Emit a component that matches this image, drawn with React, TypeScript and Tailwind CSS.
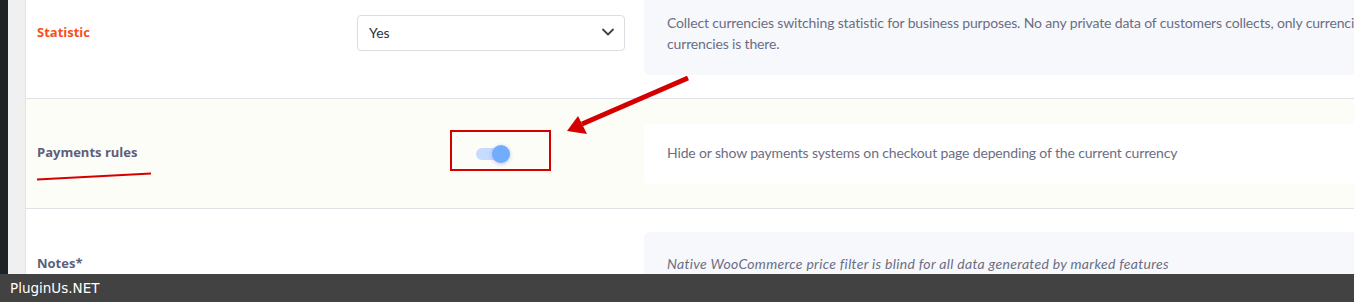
import React from "react";

export default function App() {
  return (
    <div className="relative flex h-[302px] w-[1354px] flex-col overflow-hidden bg-white font-['Lato',sans-serif]">
      <div className="flex min-h-0 flex-1">
        <div className="w-[8px] shrink-0 bg-[#1d2327]" />
        <div className="w-[18px] shrink-0 border-r border-[#e4e4e7] bg-[#f0f0f1]" />
        <div className="min-w-0 flex-1 overflow-hidden">
          {/* Row 1 */}
          <div className="flex h-[99px] items-start border-b border-[#e1e1e8] bg-white">
            <div className="w-[331px] shrink-0 pl-[11px] pt-[22px] font-['Open_Sans',sans-serif] text-[13px] font-bold leading-[20px] text-[#f4511e]">
              Statistic
            </div>
            <div className="mt-[15px] flex h-[36px] w-[268px] shrink-0 items-center justify-between rounded-[4px] border border-[#dcdce2] bg-white pb-[2px] pl-[11px] pr-[9px] text-[14px] text-[#2c3338]">
              <span>Yes</span>
              <svg width="14" height="14" viewBox="0 0 14 14" fill="none">
                <path d="M2 4.5 L7 9.5 L12 4.5" stroke="#3c434a" strokeWidth="1.8" strokeLinecap="round" strokeLinejoin="round" />
              </svg>
            </div>
            <div className="ml-[19px] mt-[-14px] h-[89px] w-[900px] shrink-0 whitespace-nowrap rounded-[6px] bg-[#f7f8fc] pl-[23px] pt-[26px] text-[14px] leading-[21px] tracking-[-0.15px] text-[#6b6e83]">
              Collect currencies switching statistic for business purposes. No any private data of customers collects, only currencies code, date and time. Also statistic for
              <br />
              currencies is there.
            </div>
          </div>
          {/* Row 2 */}
          <div className="flex h-[110px] items-center border-b border-[#e1e1e8] bg-[#fdfdf8]">
            <div className="w-[331px] shrink-0 pb-[3px] pl-[11px] font-['Open_Sans',sans-serif] text-[13px] font-bold leading-[20px] text-[#5b5f7d]">
              Payments rules
            </div>
            <div className="flex w-[268px] shrink-0 justify-center">
              <div className="relative h-[12px] w-[30px] rounded-full bg-[#c6dcfd]">
                <div className="absolute right-[-4px] top-[-3px] h-[18px] w-[18px] rounded-full bg-[#71adfc] shadow-[0_1px_4px_rgba(60,90,200,0.35)]" />
              </div>
            </div>
            <div className="ml-[19px] flex h-[60px] w-[900px] shrink-0 items-center whitespace-nowrap rounded-[6px] bg-white pb-[2px] pl-[23px] text-[14px] leading-[21px] tracking-[-0.15px] text-[#6b6e83]">
              Hide or show payments systems on checkout page depending of the current currency
            </div>
          </div>
          {/* Row 3 */}
          <div className="flex items-start bg-white">
            <div className="mt-[44px] w-[331px] shrink-0 pl-[11px] font-['Open_Sans',sans-serif] text-[13px] font-bold leading-[20px] text-[#5b5f7d]">
              Notes*
            </div>
            <div className="w-[268px] shrink-0" />
            <div className="ml-[19px] mt-[23px] h-[80px] w-[900px] shrink-0 whitespace-nowrap rounded-[6px] bg-[#f7f8fc] pl-[23px] pt-[21px] text-[14px] italic leading-[21px] tracking-[0.3px] text-[#6b6e83]">
              Native WooCommerce price filter is blind for all data generated by marked features
            </div>
          </div>
        </div>
      </div>
      <div className="flex h-[28px] shrink-0 items-center bg-[#424242] pl-[10px] font-['DejaVu_Sans',sans-serif] text-[13.5px] text-white">
        PluginUs.NET
      </div>

      {/* Annotations */}
      <svg className="pointer-events-none absolute left-0 top-0" width="1354" height="302" viewBox="0 0 1354 302">
        <line x1="37" y1="179.5" x2="151" y2="173.5" stroke="#d40000" strokeWidth="2" />
        <rect x="451" y="131" width="99" height="39" fill="none" stroke="#d40000" strokeWidth="2" />
        <line x1="688" y1="78" x2="582" y2="124" stroke="#d40000" strokeWidth="5" />
        <polygon points="567,131 578,116 587,134" fill="#d40000" />
      </svg>
    </div>
  );
}
